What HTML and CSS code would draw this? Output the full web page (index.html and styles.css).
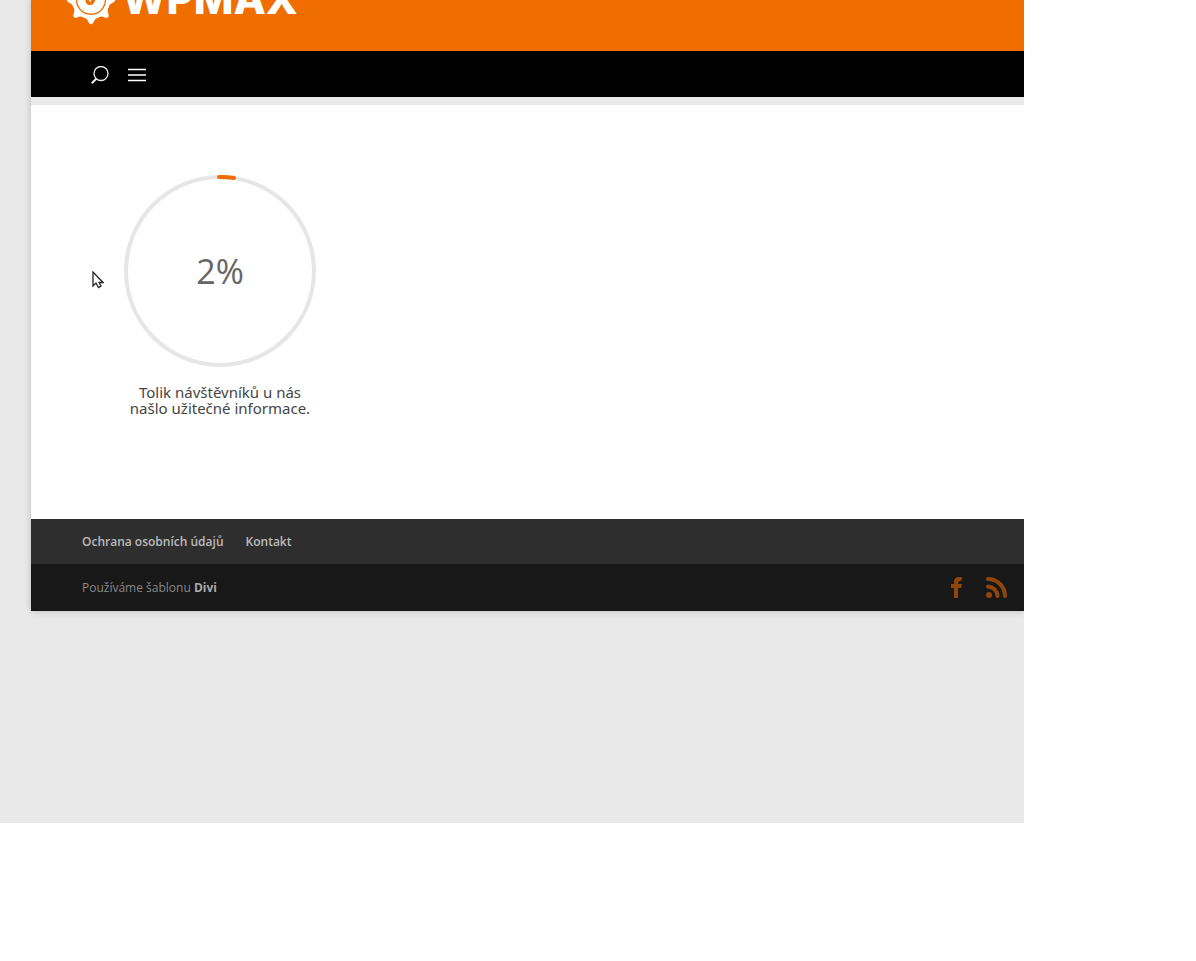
FILE: index.html
```html
<!DOCTYPE html>
<html lang="cs">
<head>
<meta charset="utf-8">
<title>WPMAX</title>
<link rel="stylesheet" href="styles.css">
</head>
<body>
<div class="stage">
  <div class="site">
    <header class="brand">
      <a class="logo" href="#" aria-label="WPMAX">
        <svg class="gear" viewBox="0 0 50 50" aria-hidden="true">
          <g fill="#fff">
            <circle cx="25" cy="25" r="19"/>
            <g id="teeth">
              <path id="tooth" d="M17 42Q21.500 43.500 22.300 47Q25 51.500 27.700 47Q28.500 43.500 33 42Z"/>
              <use href="#tooth" transform="rotate(45 25 25)"/>
              <use href="#tooth" transform="rotate(90 25 25)"/>
              <use href="#tooth" transform="rotate(135 25 25)"/>
            </g>
            <use href="#teeth" transform="rotate(180 25 25)"/>
          </g>
          <path d="M11 21A14.500 14.500 0 1 0 39 21" fill="none" stroke="#f06e00" stroke-width="1.300"/>
          <path d="M19.500 22Q18.500 30 24 30Q28.500 30 29.500 24L27 22L24 27.500L22 22Z" fill="#f06e00"/>
        </svg>
        <span class="wordmark">WPMAX</span>
      </a>
    </header>
    <nav class="toolbar" aria-label="Menu">
      <button class="tool" type="button" aria-label="Hledat">
        <svg viewBox="0 0 18 18" fill="none" stroke="#eee" stroke-width="1.300"><circle cx="10" cy="7.500" r="7"/><path d="M5.500 12.500L.8 17.200" stroke-width="2"/></svg>
      </button>
      <button class="tool" type="button" aria-label="Otevřít menu">
        <svg viewBox="0 0 18 18" fill="none" stroke="#fff" stroke-width="1.700"><path d="M0 3.500h18M0 9h18M0 14.500h18"/></svg>
      </button>
    </nav>
    <main class="content">
      <section class="counter">
        <div class="dial">
          <svg class="ring" viewBox="0 0 192 192" fill="none" aria-hidden="true">
            <circle cx="96" cy="96" r="94" stroke="#e6e6e6" stroke-width="4"/>
            <path d="M95 2A94 94 0 0 1 110 3" stroke="#f06e00" stroke-width="4" stroke-linecap="round"/>
          </svg>
          <span class="percent">2%</span>
        </div>
        <h3 class="caption">Tolik návštěvníků u nás našlo užitečné informace.</h3>
      </section>
    </main>
    <footer>
      <nav class="links" aria-label="Zápatí">
        <a href="#">Ochrana osobních údajů</a>
        <a href="#">Kontakt</a>
      </nav>
      <div class="credits">
        <p>Používáme šablonu <a href="#">Divi</a></p>
        <div class="social">
          <a href="#" aria-label="Facebook"><svg class="fb" viewBox="0 0 11 21"><path fill="#904609" d="M3 21V11H0V7H3V5Q3 0 8 0H10Q11 0 11 2Q11 4 9 4Q7 4 7 6V7H11L10 11H7V21Z"/></svg></a>
          <a href="#" aria-label="RSS"><svg class="rss" viewBox="0 0 21 21" fill="none" stroke="#904609" stroke-width="4" stroke-linecap="round"><circle cx="3" cy="18" r="3" fill="#904609" stroke="none"/><path d="M2 9.500A10 10 0 0 1 11.500 19M2 2A17 17 0 0 1 19 19"/></svg></a>
        </div>
      </div>
    </footer>
  </div>
  <svg class="pointer" viewBox="0 0 12 18" aria-hidden="true"><path d="M1 1V15L4 12L6.500 16.500L9 15L7 11.500H11Z" fill="#fff" stroke="#222" stroke-width="1.300"/></svg>
</div>
</body>
</html>
```
FILE: styles.css
```css
* { box-sizing: border-box; }
body {
  margin: 0;
  background: #fff;
  color: #444;
  font-family: "Open Sans", "Noto Sans", sans-serif;
}
a { color: inherit; text-decoration: none; }
svg { display: block; }

.stage {
  position: relative;
  margin: 0 172px 138px 0;
  padding: 0 0 212px 31px;
  background: #e9e9e9;
  overflow: hidden;
}
.site {
  background: #e9e9e9;
  box-shadow: 0 0 7px rgba(0, 0, 0, .2);
}

.brand {
  display: flex;
  align-items: flex-end;
  height: 51px;
  padding: 0 0 26px 35px;
  background: #f06e00;
}
.logo { display: flex; align-items: flex-end; gap: 6px; color: #fff; }
.gear { width: 50px; height: 50px; }
.wordmark {
  font: 800 42px/52px Inter, sans-serif;
}

.toolbar {
  display: flex;
  align-items: center;
  gap: 19px;
  height: 46px;
  padding: 2px 60px 0;
  background: #000;
}
.tool { padding: 0; border: 0; background: none; cursor: pointer; }
.tool svg { width: 18px; height: 18px; }

.content {
  margin-top: 8px;
  padding: 70px 93px 103px;
  background: #fff;
}
.counter { width: 192px; }
.dial { display: grid; place-items: center; }
.ring, .percent { grid-area: 1 / 1; }
.ring { width: 100%; }
.percent { color: #666; font-size: 34px; line-height: 40px; }
.caption {
  margin: 17px 0 0;
  font-family: "Noto Sans", sans-serif;
  font-size: 15px;
  font-weight: 400;
  line-height: 16px;
  text-align: center;
}

.links {
  display: flex;
  align-items: center;
  gap: 22px;
  height: 45px;
  padding: 0 51px;
  background: #2e2e2e;
  color: #bbb;
  font-size: 12px;
  font-weight: 600;
}
.credits {
  display: flex;
  align-items: center;
  justify-content: space-between;
  height: 47px;
  padding: 0 17px 0 51px;
  background: #181818;
  color: #888;
  font-size: 12px;
}
.credits p { margin: 0; }
.credits p a { color: #aaa; font-weight: 700; }
.social { display: flex; align-items: center; gap: 24px; }
.fb { width: 11px; height: 21px; }
.rss { width: 21px; height: 21px; }

.pointer {
  position: absolute;
  top: 271px;
  left: 92px;
  width: 12px;
  height: 18px;
}
```
